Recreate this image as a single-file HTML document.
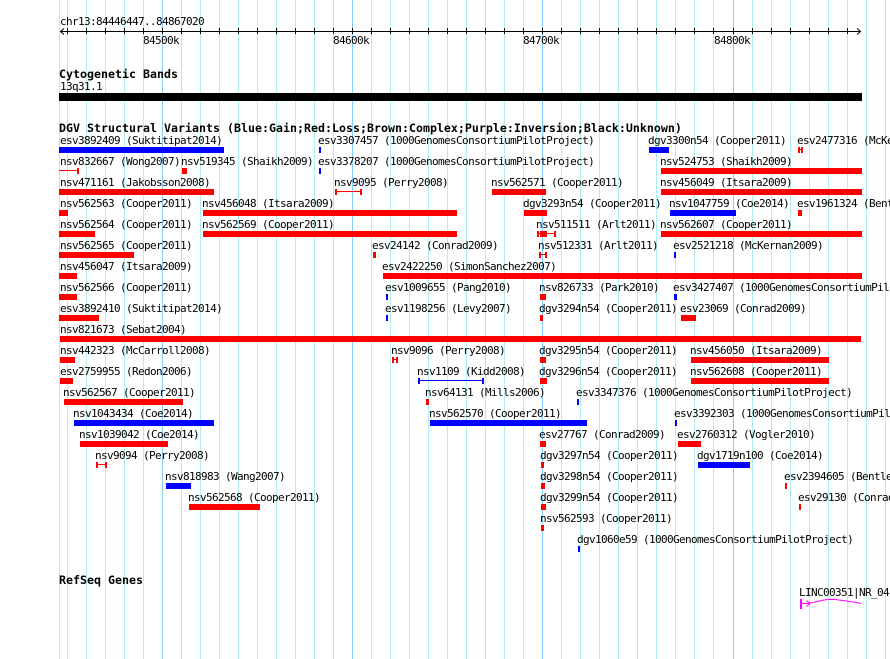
<!DOCTYPE html>
<html><head><meta charset="utf-8"><title>GBrowse tracks</title>
<style>
html,body{margin:0;padding:0;background:#fff;width:890px;height:659px;overflow:hidden}
svg{display:block;position:absolute;left:0;top:0}
text{font-family:"DejaVu Sans Mono","Liberation Mono",monospace;font-size:11px;letter-spacing:-0.62px;fill:#000;white-space:pre}
text.b{font-family:"DejaVu Sans Mono","Liberation Mono",monospace;font-weight:bold;font-size:11.63px;letter-spacing:0}
.r rect{fill:#f00}.u rect{fill:#00f}
</style></head><body>
<svg width="890" height="659" viewBox="0 0 890 659" xmlns="http://www.w3.org/2000/svg">
<g shape-rendering="crispEdges" fill="#afeeee">
<rect x="59" y="0" width="1" height="659"/><rect x="67" y="0" width="1" height="659"/><rect x="86" y="0" width="1" height="659"/><rect x="105" y="0" width="1" height="659"/><rect x="124" y="0" width="1" height="659"/><rect x="143" y="0" width="1" height="659"/><rect x="162" y="0" width="1" height="659" fill="#87cefa"/><rect x="181" y="0" width="1" height="659"/><rect x="200" y="0" width="1" height="659"/><rect x="219" y="0" width="1" height="659"/><rect x="238" y="0" width="1" height="659"/><rect x="257" y="0" width="1" height="659"/><rect x="276" y="0" width="1" height="659"/><rect x="295" y="0" width="1" height="659"/><rect x="314" y="0" width="1" height="659"/><rect x="333" y="0" width="1" height="659"/><rect x="352" y="0" width="1" height="659" fill="#87cefa"/><rect x="371" y="0" width="1" height="659"/><rect x="390" y="0" width="1" height="659"/><rect x="409" y="0" width="1" height="659"/><rect x="428" y="0" width="1" height="659"/><rect x="447" y="0" width="1" height="659"/><rect x="466" y="0" width="1" height="659"/><rect x="485" y="0" width="1" height="659"/><rect x="504" y="0" width="1" height="659"/><rect x="523" y="0" width="1" height="659"/><rect x="542" y="0" width="1" height="659" fill="#87cefa"/><rect x="561" y="0" width="1" height="659"/><rect x="580" y="0" width="1" height="659"/><rect x="599" y="0" width="1" height="659"/><rect x="618" y="0" width="1" height="659"/><rect x="637" y="0" width="1" height="659"/><rect x="656" y="0" width="1" height="659"/><rect x="675" y="0" width="1" height="659"/><rect x="694" y="0" width="1" height="659"/><rect x="713" y="0" width="1" height="659"/><rect x="733" y="0" width="1" height="659" fill="#87cefa"/><rect x="752" y="0" width="1" height="659"/><rect x="771" y="0" width="1" height="659"/><rect x="790" y="0" width="1" height="659"/><rect x="809" y="0" width="1" height="659"/><rect x="828" y="0" width="1" height="659"/><rect x="847" y="0" width="1" height="659"/><rect x="866" y="0" width="1" height="659"/><rect x="885" y="0" width="1" height="659"/>
</g>

<!-- ruler -->
<g shape-rendering="crispEdges" fill="#000">
<rect x="60" y="31" width="801" height="1"/>
<rect x="67" y="28" width="1" height="6"/><rect x="86" y="28" width="1" height="6"/><rect x="105" y="28" width="1" height="6"/><rect x="124" y="28" width="1" height="6"/><rect x="143" y="28" width="1" height="6"/><rect x="162" y="28" width="1" height="6"/><rect x="181" y="28" width="1" height="6"/><rect x="200" y="28" width="1" height="6"/><rect x="219" y="28" width="1" height="6"/><rect x="238" y="28" width="1" height="6"/><rect x="257" y="28" width="1" height="6"/><rect x="276" y="28" width="1" height="6"/><rect x="295" y="28" width="1" height="6"/><rect x="314" y="28" width="1" height="6"/><rect x="333" y="28" width="1" height="6"/><rect x="352" y="28" width="1" height="6"/><rect x="371" y="28" width="1" height="6"/><rect x="390" y="28" width="1" height="6"/><rect x="409" y="28" width="1" height="6"/><rect x="428" y="28" width="1" height="6"/><rect x="447" y="28" width="1" height="6"/><rect x="466" y="28" width="1" height="6"/><rect x="485" y="28" width="1" height="6"/><rect x="504" y="28" width="1" height="6"/><rect x="523" y="28" width="1" height="6"/><rect x="542" y="28" width="1" height="6"/><rect x="561" y="28" width="1" height="6"/><rect x="580" y="28" width="1" height="6"/><rect x="599" y="28" width="1" height="6"/><rect x="618" y="28" width="1" height="6"/><rect x="637" y="28" width="1" height="6"/><rect x="656" y="28" width="1" height="6"/><rect x="675" y="28" width="1" height="6"/><rect x="694" y="28" width="1" height="6"/><rect x="713" y="28" width="1" height="6"/><rect x="733" y="28" width="1" height="6"/><rect x="752" y="28" width="1" height="6"/><rect x="771" y="28" width="1" height="6"/><rect x="790" y="28" width="1" height="6"/><rect x="809" y="28" width="1" height="6"/><rect x="828" y="28" width="1" height="6"/><rect x="847" y="28" width="1" height="6"/>
</g>
<path d="M64 28.5 L60.5 31.5 L64 34.5 M857 28.5 L860.5 31.5 L857 34.5" fill="none" stroke="#000" stroke-width="1"/>
<text x="60" y="25">chr13:84446447..84867020</text>
<text x="143" y="44">84500k</text><text x="333" y="44">84600k</text><text x="523" y="44">84700k</text><text x="714" y="44">84800k</text>

<!-- cytoband -->
<text class="b" x="59" y="78">Cytogenetic Bands</text>
<text x="60" y="90">13q31.1</text>
<rect x="59" y="93" width="803" height="8" fill="#000" shape-rendering="crispEdges"/>

<text class="b" x="59" y="132">DGV Structural Variants (Blue:Gain;Red:Loss;Brown:Complex;Purple:Inversion;Black:Unknown)</text>

<!-- labels -->
<text x="60" y="144">esv3892409 (Suktitipat2014)</text>
<text x="318" y="144">esv3307457 (1000GenomesConsortiumPilotProject)</text>
<text x="648" y="144">dgv3300n54 (Cooper2011)</text>
<text x="797" y="144">esv2477316 (McKernan2009)</text>

<text x="60" y="165">nsv832667 (Wong2007)</text>
<text x="181" y="165">nsv519345 (Shaikh2009)</text>
<text x="318" y="165">esv3378207 (1000GenomesConsortiumPilotProject)</text>
<text x="660" y="165">nsv524753 (Shaikh2009)</text>

<text x="60" y="186">nsv471161 (Jakobsson2008)</text>
<text x="334" y="186">nsv9095 (Perry2008)</text>
<text x="491" y="186">nsv562571 (Cooper2011)</text>
<text x="660" y="186">nsv456049 (Itsara2009)</text>

<text x="60" y="207">nsv562563 (Cooper2011)</text>
<text x="202" y="207">nsv456048 (Itsara2009)</text>
<text x="523" y="207">dgv3293n54 (Cooper2011)</text>
<text x="669" y="207">nsv1047759 (Coe2014)</text>
<text x="797" y="207">esv1961324 (Bentley2008)</text>

<text x="60" y="228">nsv562564 (Cooper2011)</text>
<text x="202" y="228">nsv562569 (Cooper2011)</text>
<text x="536" y="228">nsv511511 (Arlt2011)</text>
<text x="660" y="228">nsv562607 (Cooper2011)</text>

<text x="60" y="249">nsv562565 (Cooper2011)</text>
<text x="372" y="249">esv24142 (Conrad2009)</text>
<text x="538" y="249">nsv512331 (Arlt2011)</text>
<text x="673" y="249">esv2521218 (McKernan2009)</text>

<text x="60" y="270">nsv456047 (Itsara2009)</text>
<text x="382" y="270">esv2422250 (SimonSanchez2007)</text>

<text x="60" y="291">nsv562566 (Cooper2011)</text>
<text x="385" y="291">esv1009655 (Pang2010)</text>
<text x="539" y="291">nsv826733 (Park2010)</text>
<text x="673" y="291">esv3427407 (1000GenomesConsortiumPilotProject)</text>

<text x="60" y="312">esv3892410 (Suktitipat2014)</text>
<text x="385" y="312">esv1198256 (Levy2007)</text>
<text x="539" y="312">dgv3294n54 (Cooper2011)</text>
<text x="680" y="312">esv23069 (Conrad2009)</text>

<text x="60" y="333">nsv821673 (Sebat2004)</text>

<text x="60" y="354">nsv442323 (McCarroll2008)</text>
<text x="391" y="354">nsv9096 (Perry2008)</text>
<text x="539" y="354">dgv3295n54 (Cooper2011)</text>
<text x="690" y="354">nsv456050 (Itsara2009)</text>

<text x="60" y="375">esv2759955 (Redon2006)</text>
<text x="417" y="375">nsv1109 (Kidd2008)</text>
<text x="539" y="375">dgv3296n54 (Cooper2011)</text>
<text x="690" y="375">nsv562608 (Cooper2011)</text>

<text x="63" y="396">nsv562567 (Cooper2011)</text>
<text x="425" y="396">nsv64131 (Mills2006)</text>
<text x="576" y="396">esv3347376 (1000GenomesConsortiumPilotProject)</text>

<text x="73" y="417">nsv1043434 (Coe2014)</text>
<text x="429" y="417">nsv562570 (Cooper2011)</text>
<text x="674" y="417">esv3392303 (1000GenomesConsortiumPilotProject)</text>

<text x="79" y="438">nsv1039042 (Coe2014)</text>
<text x="539" y="438">esv27767 (Conrad2009)</text>
<text x="677" y="438">esv2760312 (Vogler2010)</text>

<text x="95" y="459">nsv9094 (Perry2008)</text>
<text x="540" y="459">dgv3297n54 (Cooper2011)</text>
<text x="697" y="459">dgv1719n100 (Coe2014)</text>

<text x="165" y="480">nsv818983 (Wang2007)</text>
<text x="540" y="480">dgv3298n54 (Cooper2011)</text>
<text x="784" y="480">esv2394605 (Bentley2008)</text>

<text x="188" y="501">nsv562568 (Cooper2011)</text>
<text x="540" y="501">dgv3299n54 (Cooper2011)</text>
<text x="798" y="501">esv29130 (Conrad2009)</text>

<text x="540" y="522">nsv562593 (Cooper2011)</text>
<text x="577" y="543">dgv1060e59 (1000GenomesConsortiumPilotProject)</text>

<text class="b" x="59" y="584">RefSeq Genes</text>
<text x="799" y="596">LINC00351|NR_04</text>

<!-- blue bars -->
<g class="u" shape-rendering="crispEdges">
<rect x="59" y="147" width="165" height="6"/>
<rect x="319" y="147" width="2" height="6"/>
<rect x="649" y="147" width="20" height="6"/>
<rect x="319" y="168" width="2" height="6"/>
<rect x="670" y="210" width="66" height="6"/>
<rect x="674" y="252" width="2" height="6"/>
<rect x="386" y="294" width="2" height="6"/>
<rect x="674" y="294" width="3" height="6"/>
<rect x="386" y="315" width="2" height="6"/>
<rect x="418" y="380" width="66" height="1"/><rect x="418" y="378" width="2" height="6"/><rect x="482" y="378" width="2" height="6"/>
<rect x="577" y="399" width="2" height="6"/>
<rect x="74" y="420" width="140" height="6"/>
<rect x="430" y="420" width="157" height="6"/>
<rect x="675" y="420" width="2" height="6"/>
<rect x="698" y="462" width="52" height="6"/>
<rect x="166" y="483" width="25" height="6"/>
<rect x="578" y="546" width="2" height="6"/>
</g>

<!-- red bars -->
<g class="r" shape-rendering="crispEdges">
<rect x="798" y="147" width="2" height="6"/><rect x="801" y="147" width="2" height="6"/><rect x="798" y="149" width="5" height="1"/>
<rect x="59" y="170" width="20" height="1"/><rect x="77" y="168" width="2" height="6"/>
<rect x="182" y="168" width="5" height="6"/>
<rect x="661" y="168" width="201" height="6"/>
<rect x="59" y="189" width="155" height="6"/>
<rect x="335" y="191" width="27" height="1"/><rect x="335" y="189" width="2" height="6"/><rect x="360" y="189" width="2" height="6"/>
<rect x="492" y="189" width="54" height="6"/>
<rect x="661" y="189" width="201" height="6"/>
<rect x="59" y="210" width="9" height="6"/>
<rect x="203" y="210" width="254" height="6"/>
<rect x="524" y="210" width="23" height="6"/>
<rect x="798" y="210" width="4" height="6"/>
<rect x="59" y="231" width="36" height="6"/>
<rect x="203" y="231" width="254" height="6"/>
<rect x="537" y="231" width="2" height="6"/><rect x="537" y="233" width="19" height="1"/><rect x="540" y="231" width="7" height="6"/><rect x="554" y="231" width="2" height="6"/>
<rect x="661" y="231" width="201" height="6"/>
<rect x="59" y="252" width="75" height="6"/>
<rect x="373" y="252" width="3" height="6"/>
<rect x="539" y="252" width="2" height="6"/><rect x="539" y="254" width="8" height="1"/><rect x="545" y="252" width="2" height="6"/>
<rect x="59" y="273" width="18" height="6"/>
<rect x="383" y="273" width="479" height="6"/>
<rect x="59" y="294" width="18" height="6"/>
<rect x="540" y="294" width="6" height="6"/>
<rect x="59" y="315" width="40" height="6"/>
<rect x="540" y="315" width="3" height="6"/>
<rect x="681" y="315" width="15" height="6"/>
<rect x="60" y="336" width="801" height="6"/>
<rect x="60" y="357" width="15" height="6"/>
<rect x="392" y="357" width="2" height="6"/><rect x="396" y="357" width="2" height="6"/><rect x="392" y="359" width="6" height="1"/>
<rect x="540" y="357" width="6" height="6"/>
<rect x="691" y="357" width="138" height="6"/>
<rect x="60" y="378" width="13" height="6"/>
<rect x="540" y="378" width="7" height="6"/>
<rect x="691" y="378" width="138" height="6"/>
<rect x="64" y="399" width="119" height="6"/>
<rect x="426" y="399" width="3" height="6"/>
<rect x="80" y="441" width="88" height="6"/>
<rect x="540" y="441" width="6" height="6"/>
<rect x="678" y="441" width="23" height="6"/>
<rect x="96" y="462" width="2" height="6"/><rect x="105" y="462" width="2" height="6"/><rect x="96" y="464" width="11" height="1"/>
<rect x="541" y="462" width="3" height="6"/>
<rect x="541" y="483" width="4" height="6"/>
<rect x="785" y="483" width="2" height="6"/>
<rect x="189" y="504" width="71" height="6"/>
<rect x="541" y="504" width="5" height="6"/>
<rect x="799" y="504" width="2" height="6"/>
<rect x="541" y="525" width="3" height="6"/>
</g>

<!-- gene -->
<rect x="800" y="599" width="2" height="10" fill="#f0f" shape-rendering="crispEdges"/>
<path d="M802 603.5H810M806.5 600.5L810 603.5L806.5 606.5" fill="none" stroke="#f0f" stroke-width="1"/>
<path d="M810 603 L818 601.5 L821 600.5 L828 599.5 L835 599.5 L843 600.5 L850 601.5 L857 602.5 L861 603.5" fill="none" stroke="#f0f" stroke-width="1"/>
</svg>
</body></html>
